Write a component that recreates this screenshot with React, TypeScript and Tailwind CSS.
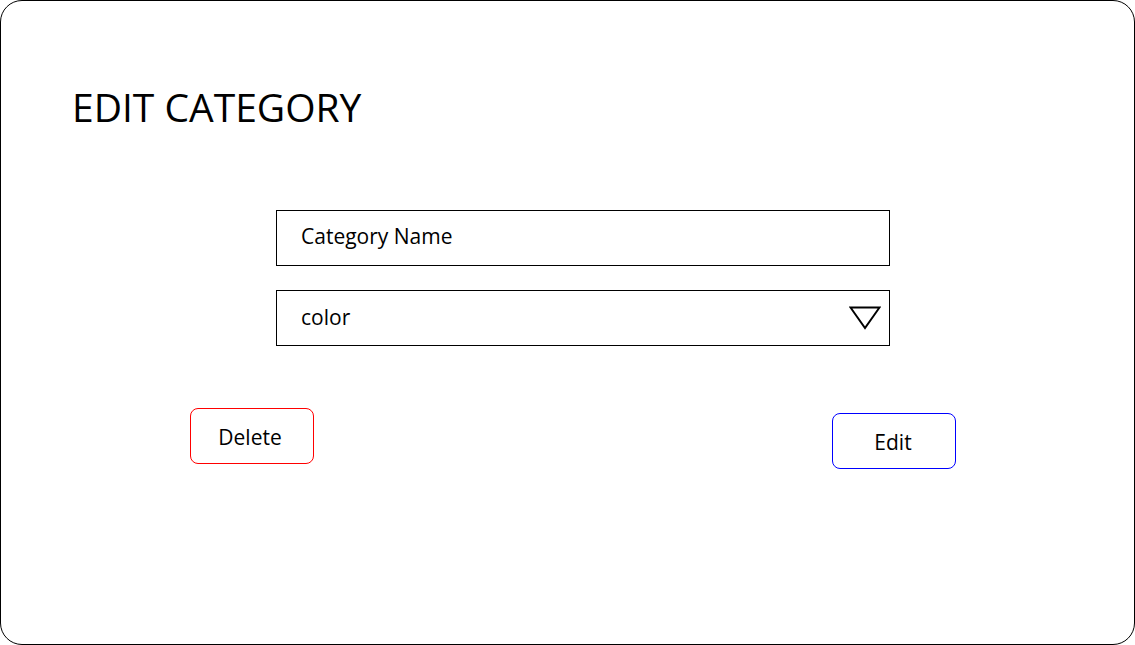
import React from "react";

function Triangle() {
  return (
    <svg width="32" height="24" viewBox="0 0 32 24" className="shrink-0">
      <path d="M1.5 1.5 H30.5 L16 22 Z" fill="none" stroke="#000" strokeWidth="2" strokeLinejoin="miter" />
    </svg>
  );
}

export default function App() {
  return (
    <div
      className="w-[1135px] h-[645px] bg-white text-black"
      style={{ fontFamily: '"Open Sans", "Noto Sans", sans-serif' }}
    >
      <div className="h-full w-full border border-black rounded-[22px] flex flex-col">
        {/* Title */}
        <h1 className="ml-[71px] mt-[80px] text-[39px] leading-[52px] font-normal">
          EDIT CATEGORY
        </h1>

        {/* Form fields */}
        <div className="ml-[275px] mt-[77px] w-[614px] flex flex-col gap-[24px]">
          <div className="h-[56px] border border-black flex items-center px-[24px] pb-[4px]">
            <span className="text-[21px] leading-none">Category Name</span>
          </div>
          <div className="h-[56px] border border-black flex items-center justify-between pl-[24px] pr-[8px]">
            <span className="text-[21px] leading-none pb-[2px]">color</span>
            <Triangle />
          </div>
        </div>

        {/* Actions */}
        <div className="mt-[62px] flex items-start">
          <button className="ml-[189px] w-[124px] h-[56px] border border-[#ff0000] rounded-[8px] text-[21px] pr-[4px] pt-[3px]">
            Delete
          </button>
          <button className="ml-[518px] mt-[5px] w-[124px] h-[56px] border border-[#0000ff] rounded-[8px] text-[21px] pr-[2px] pt-[3px]">
            Edit
          </button>
        </div>
      </div>
    </div>
  );
}
